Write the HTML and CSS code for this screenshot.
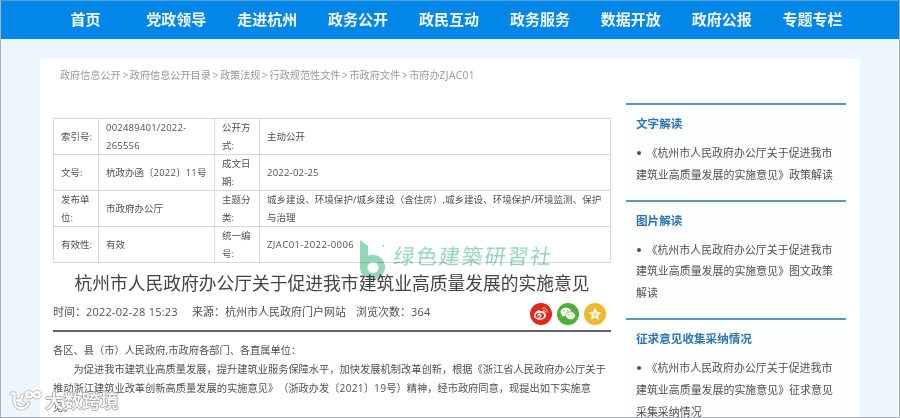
FILE: index.html
```html
<!DOCTYPE html>
<html lang="zh-CN">
<head>
  <meta charset="UTF-8">
  <title>杭州市人民政府办公厅关于促进我市建筑业高质量发展的实施意见</title>
  <link rel="stylesheet" href="styles.css">
</head>
<body>
<div class="page">

  <nav class="nav">
    <a>首页</a>
    <a>党政领导</a>
    <a>走进杭州</a>
    <a>政务公开</a>
    <a>政民互动</a>
    <a>政务服务</a>
    <a>数据开放</a>
    <a>政府公报</a>
    <a>专题专栏</a>
  </nav>

  <div class="container">
    <div class="main">
      <div class="crumb">政府信息公开<i>&gt;</i>政府信息公开目录<i>&gt;</i>政策法规<i>&gt;</i>行政规范性文件<i>&gt;</i>市政府文件<i>&gt;</i>市府办<span class="code">ZJAC01</span></div>

      <table class="info">
        <colgroup><col class="c1"><col class="c2"><col class="c3"><col class="c4"></colgroup>
        <tr>
          <td>索引号:</td>
          <td><span class="num">002489401/2022-<br>265556</span></td>
          <td>公开方<br>式:</td>
          <td>主动公开</td>
        </tr>
        <tr>
          <td>文号:</td>
          <td>杭政办函〔<span class="num">2022</span>〕<span class="num">11</span>号</td>
          <td>成文日<br>期:</td>
          <td><span class="num">2022-02-25</span></td>
        </tr>
        <tr>
          <td>发布单<br>位:</td>
          <td>市政府办公厅</td>
          <td>主题分<br>类:</td>
          <td class="subject">城乡建设、环境保护/城乡建设（含住房）,城乡建设、环境保护/环境监测、保护<br>与治理</td>
        </tr>
        <tr>
          <td>有效性:</td>
          <td>有效</td>
          <td>统一编<br>号:</td>
          <td><span class="code">ZJAC01-2022-0006</span></td>
        </tr>
      </table>

      <h1 class="title">杭州市人民政府办公厅关于促进我市建筑业高质量发展的实施意见</h1>

      <div class="meta">
        <span class="date">时间：<span class="num">2022-02-28 15:23</span></span>
        <span class="source">来源：杭州市人民政府门户网站</span>
        <span class="views">浏览次数：<span class="num">364</span></span>
        <div class="share">
          <svg viewBox="0 0 22 22">
            <circle cx="11" cy="11" r="11" fill="#e0291b"/>
            <ellipse cx="10" cy="12.4" rx="6" ry="4.3" fill="#fff"/>
            <path d="M5 10.5C6.5 7.5 9.5 6.4 10.4 8l3 .5 1 2z" fill="#fff"/>
            <ellipse cx="9.8" cy="12.6" rx="4.3" ry="2.9" fill="#e0291b"/>
            <circle cx="9.4" cy="12.7" r="2.1" fill="#fff"/>
            <circle cx="9" cy="13" r="1" fill="#e0291b"/>
            <path d="M12.6 5.3c3-.7 5.2 1.6 4.5 4.3M13 7.4c1.4-.3 2.4.7 2.1 1.9" fill="none" stroke="#fff" stroke-width=".8"/>
          </svg>
          <svg viewBox="0 0 22 22">
            <circle cx="11" cy="11" r="11" fill="#4fae35"/>
            <path d="M9 4.8c-3.2 0-5.4 1.900-5.400 4.300 0 1.400.7 2.500 1.900 3.300L5 14l2-1c2.900.6 7.400-.4 7.400-4C14.400 6.600 12.100 4.800 9 4.800z" fill="#fff"/>
            <path d="M13.600 8.800c-2.900 0-4.900 1.700-4.900 3.900 0 2.700 3 4.300 6.200 3.700l1.900 1-.5-1.600c1.300-.8 2.100-1.800 2.100-3.100 0-2.200-2.100-3.900-4.800-3.900z" fill="#fff" stroke="#4fae35" stroke-width=".7"/>
            <g fill="#4fae35"><circle cx="7.2" cy="7.8" r=".7"/><circle cx="10.8" cy="7.8" r=".7"/><circle cx="12" cy="11.7" r=".6"/><circle cx="15.2" cy="11.7" r=".6"/></g>
          </svg>
          <svg viewBox="0 0 22 22">
            <circle cx="11" cy="11" r="11" fill="#edb92e"/>
            <path d="M11 4.500l1.900 4.200 4.600.5-3.400 3.100.9 4.500-4-2.300-4 2.300.9-4.500-3.400-3.100 4.600-.5z" fill="#fff"/>
            <path d="M8.800 10.300h4l-3.300 2.700h4" fill="none" stroke="#edb92e" stroke-width=".8"/>
          </svg>
        </div>
      </div>

      <div class="article">
        <p>各区、县（市）人民政府,市政府各部门、各直属单位：</p>
        <p class="indent">为促进我市建筑业高质量发展，提升建筑业服务保障水平，加快发展机制改革创新，根据《浙江省人民政府办公厅关于<br>推动浙江建筑业改革创新高质量发展的实施意见》（浙政办发〔<span class="num">2021</span>〕<span class="num">19</span>号）精神，经市政府同意，现提出如下实施意<br>见。</p>
      </div>
    </div>

    <aside class="side">
      <section>
        <h2>文字解读</h2>
        <p><b></b>《杭州市人民政府办公厅关于促进我市<br>建筑业高质量发展的实施意见》政策解读</p>
      </section>
      <section>
        <h2>图片解读</h2>
        <p><b></b>《杭州市人民政府办公厅关于促进我市<br>建筑业高质量发展的实施意见》图文政策<br>解读</p>
      </section>
      <section>
        <h2>征求意见收集采纳情况</h2>
        <p><b></b>《杭州市人民政府办公厅关于促进我市<br>建筑业高质量发展的实施意见》征求意见<br>采集采纳情况</p>
      </section>
    </aside>
  </div>

  <div class="stamp">
    <svg viewBox="0 0 28 40">
      <path d="M2 0l8 6v9.500A12.500 12.500 0 1 1 2 27z" fill="#84cfac"/>
      <circle cx="15" cy="27.500" r="5.500" fill="#fff"/>
      <circle cx="25.500" cy="6" r="1" fill="#84cfac"/>
    </svg>
    <span>绿色建築研習社</span>
  </div>

  <div class="brand">
    <svg viewBox="0 0 34 24">
      <g class="mark-edge">
        <path d="M3.500 5.500h3v8c0 9 12 9 14 1.500"/>
        <path d="M9 12.500c3 0 5-2 5.500-5M12 12.500l4 3"/>
        <path d="M21 9.500c-3.800 0-3.800-5.500 0-5.500s4.200 5.500 8 5.500 3.800-5.500 0-5.500-4.200 5.500-8 5.500z"/>
      </g>
      <g class="mark">
        <path d="M3.500 5.500h3v8c0 9 12 9 14 1.500"/>
        <path d="M9 12.500c3 0 5-2 5.500-5M12 12.500l4 3"/>
        <path d="M21 9.500c-3.800 0-3.800-5.500 0-5.500s4.200 5.500 8 5.500 3.800-5.500 0-5.500-4.200 5.500-8 5.500z"/>
      </g>
    </svg>
    <span>大数跨境</span>
  </div>

</div>
</body>
</html>
```
FILE: styles.css
```css
* { box-sizing: border-box; }
body {
  margin: 0;
  font-family: "Open Sans", "Noto Sans CJK SC", sans-serif;
  color: #505050;
  text-spacing-trim: space-all;
}
h1, h2, p { margin: 0; }
.page {
  position: relative;
  width: 900px;
  height: 418px;
  overflow: hidden;
  background: #edf6fe;
  border: 1px solid #a9b1b8;
  border-top-color: #4d9fd8;
}

.nav { display: flex; height: 38px; padding-left: 39px; background: #0287e8; }
.nav a {
  width: 90.9px;
  line-height: 36px;
  font-size: 15px;
  font-weight: 700;
  color: #f2faff;
  text-align: center;
}

.container {
  display: flex;
  justify-content: space-between;
  width: 820px;
  height: 370px;
  margin: 20px 0 0 39px;
  padding: 0 14px 0 13px;
  background: #fff;
}
.main { width: 558px; white-space: nowrap; }

.crumb { height: 59px; padding: 8px 0 0 7px; font-size: 10.15px; line-height: 16px; color: #999; }
.crumb i { display: inline-block; width: 9.1px; font-style: normal; text-align: center; }

.info {
  width: 558px;
  table-layout: fixed;
  border-collapse: collapse;
  font-size: 9.5px;
  line-height: 17.5px;
}
.info tr { height: 36px; }
.info td { padding: 0 0 0 7px; border: 1px solid #d9d9d9; }
.info .c1, .info .c3 { width: 45px; }
.info .c2 { width: 116px; }
.num { letter-spacing: 0.22px; }
.code { letter-spacing: 0.42px; }
.info .subject { letter-spacing: 0.05px; }

.title {
  margin-top: 4px;
  font-size: 17.77px;
  line-height: 32px;
  font-weight: 400;
  color: #444;
  text-align: center;
}

.meta {
  display: flex;
  height: 33px;
  border-bottom: 2px solid #666;
  font-size: 11px;
  line-height: 26px;
}
.date { width: 139px; }
.source { width: 164px; }
.views { flex: 1; }
.share { display: flex; gap: 5px; padding: 4px 5px 0 0; }
.share svg { width: 22px; height: 22px; }

.article { padding-top: 9px; font-size: 10.24px; line-height: 19px; }
.indent { text-indent: 2em; }

.side { width: 220px; padding-top: 44px; white-space: nowrap; }
.side section {
  padding: 9px 0 14px 10px;
  border-top: 2px solid #5b98c0;
  background: #fdfefe;
}
.side h2 { margin-bottom: 8px; font-size: 11.6px; line-height: 20px; color: #2b74b6; }
.side p { font-size: 10.95px; line-height: 21.8px; }
.side b {
  display: inline-block;
  width: 4px;
  height: 4px;
  margin: 0 5.500px 2px 1px;
  border-radius: 50%;
  background: #505050;
}

.stamp { position: absolute; left: 357px; top: 239px; display: flex; opacity: 0.85; mix-blend-mode: multiply; }
.stamp svg { width: 28px; height: 40px; }
.stamp span {
  margin-left: 7px;
  font-size: 21px;
  font-weight: 400;
  line-height: 33px;
  letter-spacing: 1.8px;
  color: #84cfac;
  transform: skewX(-8deg);
}

.brand { position: absolute; left: 7px; top: 387px; display: flex; }
.brand svg { width: 34px; height: 24px; fill: none; stroke-linecap: round; stroke-linejoin: round; }
.mark-edge { stroke: #b0b0b0; stroke-width: 4; }
.mark { stroke: #fff; stroke-width: 2.4; }
.brand span {
  margin-left: 3px;
  font-size: 18.4px;
  font-weight: 500;
  line-height: 25px;
  color: #fff;
  text-shadow: 1px 0 #aaa, -1px 0 #aaa, 0 1px #aaa, 0 -1px #aaa;
}
```
